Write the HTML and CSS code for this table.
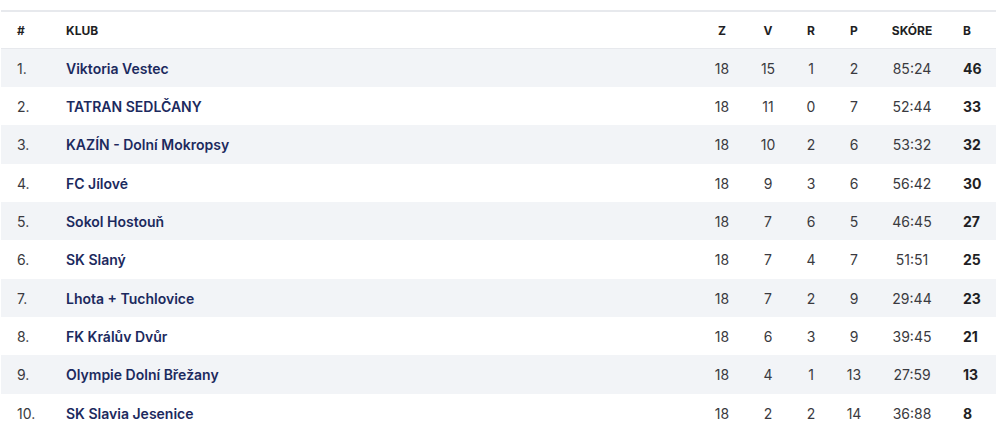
FILE: index.html
```html
<!DOCTYPE html>
<html lang="cs">
<head>
<meta charset="utf-8">
<title>Tabulka</title>
<link rel="stylesheet" href="styles.css">
</head>
<body>
<div class="wrap">
<table class="standings">
  <colgroup>
    <col class="c-pos"><col class="c-club"><col class="c-z"><col class="c-v"><col class="c-r"><col class="c-p"><col class="c-score"><col class="c-pts">
  </colgroup>
  <thead>
    <tr><th class="pos">#</th><th class="club">KLUB</th><th>Z</th><th>V</th><th>R</th><th>P</th><th>SKÓRE</th><th class="pts">B</th></tr>
  </thead>
  <tbody>
    <tr><td class="pos">1.</td><td class="club">Viktoria Vestec</td><td>18</td><td>15</td><td>1</td><td>2</td><td>85:24</td><td class="pts">46</td></tr>
    <tr><td class="pos">2.</td><td class="club">TATRAN SEDLČANY</td><td>18</td><td>11</td><td>0</td><td>7</td><td>52:44</td><td class="pts">33</td></tr>
    <tr><td class="pos">3.</td><td class="club">KAZÍN - Dolní Mokropsy</td><td>18</td><td>10</td><td>2</td><td>6</td><td>53:32</td><td class="pts">32</td></tr>
    <tr><td class="pos">4.</td><td class="club">FC Jílové</td><td>18</td><td>9</td><td>3</td><td>6</td><td>56:42</td><td class="pts">30</td></tr>
    <tr><td class="pos">5.</td><td class="club">Sokol Hostouň</td><td>18</td><td>7</td><td>6</td><td>5</td><td>46:45</td><td class="pts">27</td></tr>
    <tr><td class="pos">6.</td><td class="club">SK Slaný</td><td>18</td><td>7</td><td>4</td><td>7</td><td>51:51</td><td class="pts">25</td></tr>
    <tr><td class="pos">7.</td><td class="club">Lhota + Tuchlovice</td><td>18</td><td>7</td><td>2</td><td>9</td><td>29:44</td><td class="pts">23</td></tr>
    <tr><td class="pos">8.</td><td class="club">FK Králův Dvůr</td><td>18</td><td>6</td><td>3</td><td>9</td><td>39:45</td><td class="pts">21</td></tr>
    <tr><td class="pos">9.</td><td class="club">Olympie Dolní Břežany</td><td>18</td><td>4</td><td>1</td><td>13</td><td>27:59</td><td class="pts">13</td></tr>
    <tr><td class="pos">10.</td><td class="club">SK Slavia Jesenice</td><td>18</td><td>2</td><td>2</td><td>14</td><td>36:88</td><td class="pts">8</td></tr>
  </tbody>
</table>
</div>
</body>
</html>
```
FILE: styles.css
```css
html, body {
  margin: 0;
  padding: 0;
  background: #ffffff;
}
body {
  font-family: Inter, "Noto Sans", "Liberation Sans", sans-serif;
  color: #333;
}
.wrap {
  padding: 10px 4px 0 1px;
}
.standings {
  width: 995px;
  border-collapse: collapse;
  table-layout: fixed;
  border-top: 2px solid #e7e9ed;
}
.c-pos { width: 49px; }
.c-club { width: 650px; }
.c-z { width: 44px; }
.c-v { width: 48px; }
.c-r { width: 38px; }
.c-p { width: 48px; }
.c-score { width: 68px; }
.c-pts { width: 50px; }

.standings th {
  height: 36px;
  font-size: 12px;
  font-weight: 700;
  color: #1f1f24;
  text-align: center;
  padding: 0;
  border-bottom: 1px solid #e7e9ed;
}
.standings td {
  height: 38px;
  padding: 0;
  line-height: 19px;
  font-size: 14px;
  font-weight: 400;
  color: #3a3a40;
  text-align: center;
}
.standings tbody tr:nth-child(3n) td {
  height: 39px;
}
.standings tbody tr:nth-child(odd) td {
  background: #f2f4f7;
}
.standings .pos {
  text-align: left;
  padding-left: 16px;
}
.standings .club {
  text-align: left;
  padding-left: 16px;
}
.standings td.club {
  color: #1c2a5e;
  font-weight: 600;
}
.standings .pts {
  text-align: left;
  padding-left: 17px;
}
.standings td.pts {
  font-weight: 700;
  color: #1f1f24;
}
```
